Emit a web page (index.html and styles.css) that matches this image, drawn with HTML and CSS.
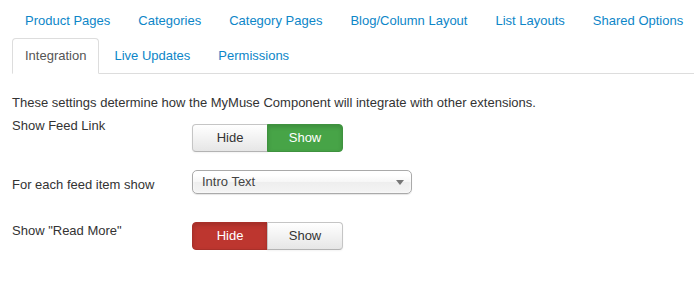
FILE: index.html
```html
<!DOCTYPE html>
<html lang="en">
<head>
  <meta charset="UTF-8" />
  <title>MyMuse Options</title>
  <link rel="stylesheet" href="styles.css">
</head>
<body>
  <ul class="nav-tabs">
    <li><a href="#">Product Pages</a></li>
    <li><a href="#">Categories</a></li>
    <li><a href="#">Category Pages</a></li>
    <li><a href="#">Blog/Column Layout</a></li>
    <li><a href="#">List Layouts</a></li>
    <li><a href="#">Shared Options</a></li>
    <li class="active"><a href="#">Integration</a></li>
    <li><a href="#">Live Updates</a></li>
    <li><a href="#">Permissions</a></li>
  </ul>

  <div class="tab-content">
    <p class="tab-description">These settings determine how the MyMuse Component will integrate with other extensions.</p>

    <div class="control-group">
      <label class="control-label">Show Feed Link</label>
      <div class="controls controls-low">
        <div class="btn-group">
          <button class="btn">Hide</button>
          <button class="btn btn-success">Show</button>
        </div>
      </div>
    </div>

    <div class="control-group">
      <label class="control-label label-select">For each feed item show</label>
      <div class="controls">
        <div class="chzn-select">
          <span>Intro Text</span>
          <b class="chzn-arrow"></b>
        </div>
      </div>
    </div>

    <div class="control-group">
      <label class="control-label">Show "Read More"</label>
      <div class="controls">
        <div class="btn-group">
          <button class="btn btn-danger">Hide</button>
          <button class="btn">Show</button>
        </div>
      </div>
    </div>
  </div>
</body>
</html>
```

FILE: styles.css
```css
:root {
  --link: #0d86c8; --text: #333; --border: #ddd;
  --success: #47a447; --danger: #bd362f; --radius: 4px;
}
html, body { overflow: hidden; }
body { font-family: "Liberation Sans", Arial, sans-serif; font-size: 13px; line-height: 18px; color: var(--text); background: #fff; margin: 0; padding: 3px 0 0 12px; }
/* Tabs: the strip runs a little past the window edge, as in the admin page */
.nav-tabs { list-style: none; margin: 0 -30px 0 0; padding: 0; display: flex; flex-wrap: wrap; border-bottom: 1px solid var(--border); }
.nav-tabs li { margin: 0 2px -1px 0; }
.nav-tabs a { display: block; padding: 8px 12px; border: 1px solid transparent; border-radius: var(--radius) var(--radius) 0 0; color: var(--link); text-decoration: none; }
.nav-tabs .active a { color: #555; background: #fff; border-color: var(--border) var(--border) transparent; }
/* Tab body */
.tab-content { padding-top: 20px; }
.tab-description { margin: 0 0 5px; }
.control-group { display: flex; align-items: flex-start; margin-bottom: 18px; }
.control-label { width: 180px; flex: none; }
.label-select { padding-top: 6px; }
.controls-low { padding-top: 7px; }
/* Toggle buttons */
.btn-group { display: flex; }
.btn { font: inherit; width: 76px; height: 28px; padding: 0; color: var(--text); cursor: pointer;
  background: linear-gradient(#fff, #e6e6e6); border: 1px solid #c5c5c5; border-bottom-color: #b3b3b3;
  box-shadow: inset 0 1px 0 rgba(255,255,255,0.2), 0 1px 2px rgba(0,0,0,0.05); }
.btn:first-child { border-radius: var(--radius) 0 0 var(--radius); }
.btn:last-child { border-radius: 0 var(--radius) var(--radius) 0; margin-left: -1px; }
.btn-success { background: var(--success); border-color: #3f923f; color: #fff; box-shadow: inset 0 2px 4px rgba(0,0,0,0.15); }
.btn-danger { background: var(--danger); border-color: #a8302a; color: #fff; box-shadow: inset 0 2px 4px rgba(0,0,0,0.15); }
/* Chosen-style select */
.chzn-select { position: relative; width: 220px; height: 24px; box-sizing: border-box; padding: 2px 0 0 9px;
  margin-bottom: 10px; color: #444; border: 1px solid #aaa; border-radius: 5px;
  background: linear-gradient(#fff 20%, #f6f6f6 50%, #eee 52%, #f4f4f4 100%);
  box-shadow: inset 0 0 3px #fff, 0 1px 1px rgba(0,0,0,0.1); }
.chzn-arrow { position: absolute; right: 7px; top: 9px; width: 0; height: 0;
  border-left: 4px solid transparent; border-right: 4px solid transparent; border-top: 5px solid #777; }
```
